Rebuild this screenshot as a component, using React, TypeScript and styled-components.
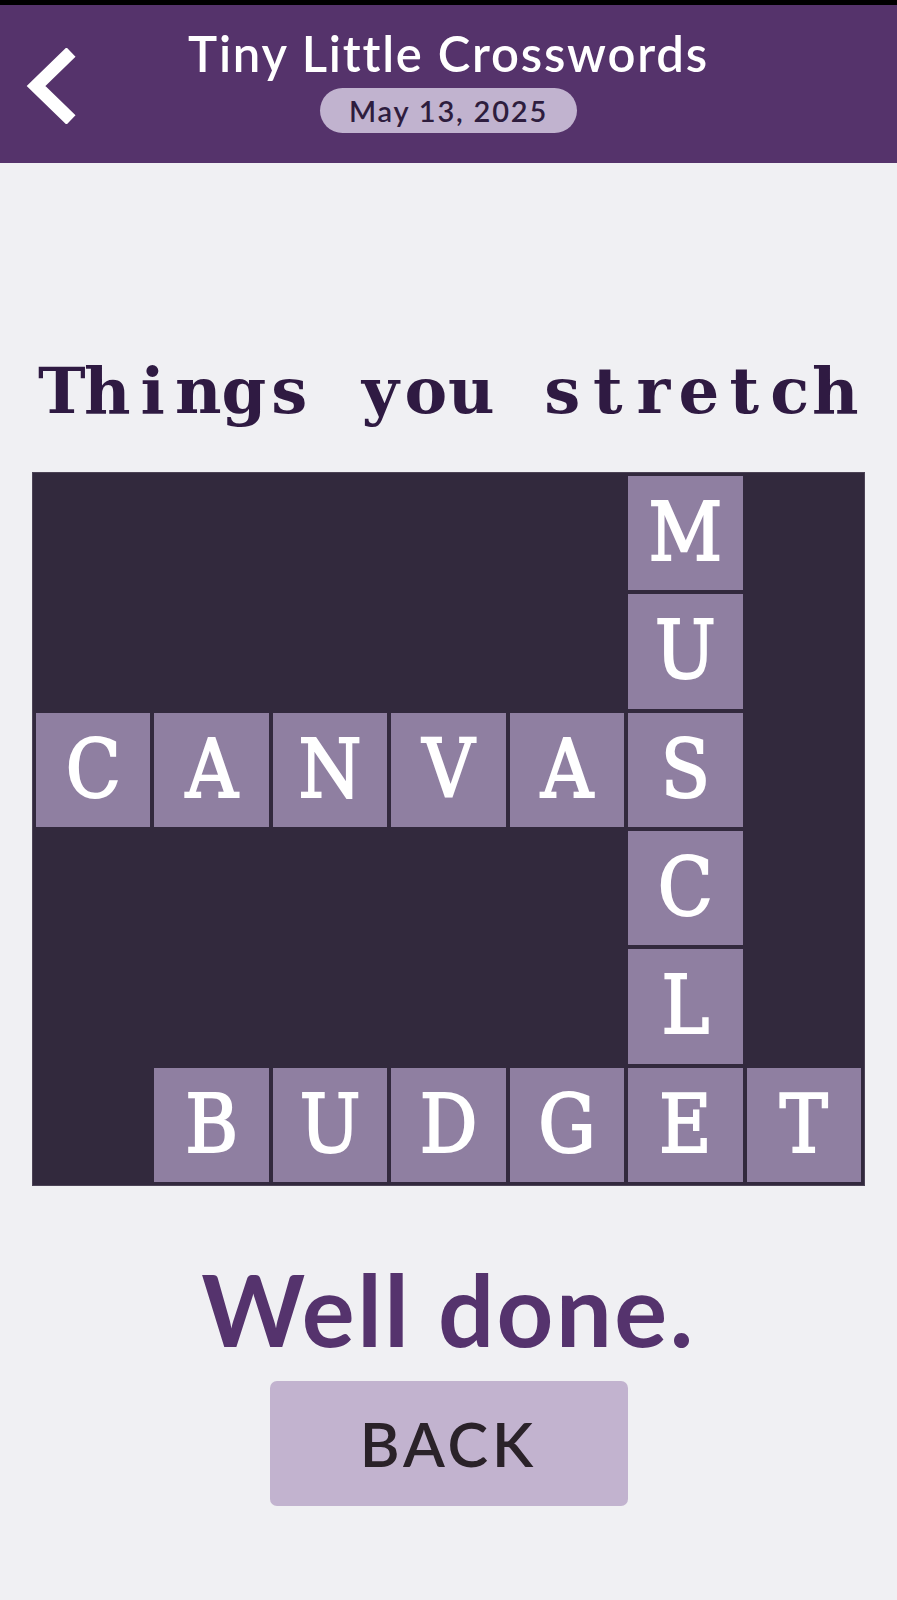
import { FC } from "react";
import styled, { createGlobalStyle } from "styled-components";

const GlobalStyle = createGlobalStyle`
  html, body {
    margin: 0;
    padding: 0;
    background: #f0f0f3;
  }
  body {
    font-family: Lato, "Open Sans", sans-serif;
  }
`;

// Solution layout: "." is a blocked square, letters are solved squares.
const SOLUTION = [
  ".....M.",
  ".....U.",
  "CANVAS.",
  ".....C.",
  ".....L.",
  ".BUDGET",
];

const CLUE = "Things you stretch";

const BackChevron: FC = () => (
  <svg width="52" height="76" viewBox="0 0 52 76" aria-hidden="true">
    <polyline
      points="46,4 11,38 46,72"
      fill="none"
      stroke="#ffffff"
      strokeWidth="13"
      strokeLinejoin="miter"
    />
  </svg>
);

const App: FC = () => {
  return (
    <>
      <GlobalStyle />
      <Page>
        <StatusStrip />
        <Header>
          <BackButton aria-label="Back">
            <BackChevron />
          </BackButton>
          <TitleBlock>
            <Title>Tiny Little Crosswords</Title>
            <DatePill>May 13, 2025</DatePill>
          </TitleBlock>
          <span />
        </Header>

        {/* typewriter-style clue: every character gets the same advance */}
        <Clue aria-label={CLUE}>
          {CLUE.split("").map((ch, i) => (
            <ClueGlyph key={i}>{ch}</ClueGlyph>
          ))}
        </Clue>

        <Board>
          {SOLUTION.flatMap((row, r) =>
            row.split("").map((ch, c) =>
              ch === "." ? (
                <Cell key={`${r}-${c}`} />
              ) : (
                <Cell key={`${r}-${c}`} $filled>
                  {ch}
                </Cell>
              )
            )
          )}
        </Board>

        <Done>Well done.</Done>
        <ActionButton type="button">BACK</ActionButton>
      </Page>
    </>
  );
};

export default App;

const Page = styled.div`
  display: flex;
  flex-direction: column;
  align-items: center;
  min-height: 1600px;
`;

const StatusStrip = styled.div`
  align-self: stretch;
  height: 5px;
  background: #000;
`;

const Header = styled.header`
  align-self: stretch;
  height: 158px;
  background: #55336b;
  display: grid;
  grid-template-columns: 1fr auto 1fr;
  align-items: start;
`;

const BackButton = styled.button`
  justify-self: start;
  margin: 43px 0 0 25px;
  padding: 0;
  border: none;
  background: none;
  display: flex;
  cursor: pointer;
`;

const TitleBlock = styled.div`
  display: flex;
  flex-direction: column;
  align-items: center;
`;

const Title = styled.h1`
  margin: 19px 0 0;
  font-family: Lato, sans-serif;
  font-weight: 600;
  font-size: 49px;
  line-height: 58px;
  letter-spacing: 1.8px;
  color: #ffffff;
  white-space: nowrap;
`;

const DatePill = styled.div`
  margin-top: 6px;
  width: 257px;
  height: 45px;
  border-radius: 23px;
  background: #c1b3cf;
  color: #2e1d3e;
  font-family: Lato, sans-serif;
  font-weight: 600;
  font-size: 29px;
  letter-spacing: 1.8px;
  display: flex;
  align-items: center;
  justify-content: center;
`;

const Clue = styled.h2`
  margin: 190px 0 0;
  display: flex;
  font-family: "DejaVu Serif", serif;
  font-weight: 700;
  font-size: 64px;
  line-height: 76px;
  color: #2f1a42;
`;

const ClueGlyph = styled.span`
  width: 45.5px;
  display: flex;
  justify-content: center;
  white-space: pre;
`;

const Board = styled.div`
  margin-top: 43px;
  width: 833px;
  height: 714px;
  box-sizing: border-box;
  padding: 3px;
  background: #32293d;
  border: 1px solid #4c4356;
  display: grid;
  grid-template-columns: repeat(7, 1fr);
  grid-template-rows: repeat(6, 1fr);
  gap: 4px;
`;

const Cell = styled.div<{ $filled?: boolean }>`
  background: ${({ $filled }) => ($filled ? "#8f7fa1" : "transparent")};
  color: #ffffff;
  -webkit-text-stroke: 2px #ffffff;
  font-family: "DejaVu Serif", serif;
  font-stretch: condensed;
  font-weight: 400;
  font-size: 80px;
  display: flex;
  align-items: center;
  justify-content: center;
  line-height: 1;
`;

const Done = styled.div`
  margin-top: 64px;
  font-family: Lato, sans-serif;
  font-weight: 700;
  font-size: 99px;
  line-height: 1.2;
  letter-spacing: 2.5px;
  color: #55336d;
`;

const ActionButton = styled.button`
  margin-top: 12px;
  width: 358px;
  height: 125px;
  border: none;
  border-radius: 7px;
  background: #c2b3cf;
  color: #2a2229;
  font-family: Lato, sans-serif;
  font-weight: 600;
  font-size: 61px;
  letter-spacing: 4px;
  display: flex;
  align-items: center;
  justify-content: center;
  cursor: pointer;
`;
